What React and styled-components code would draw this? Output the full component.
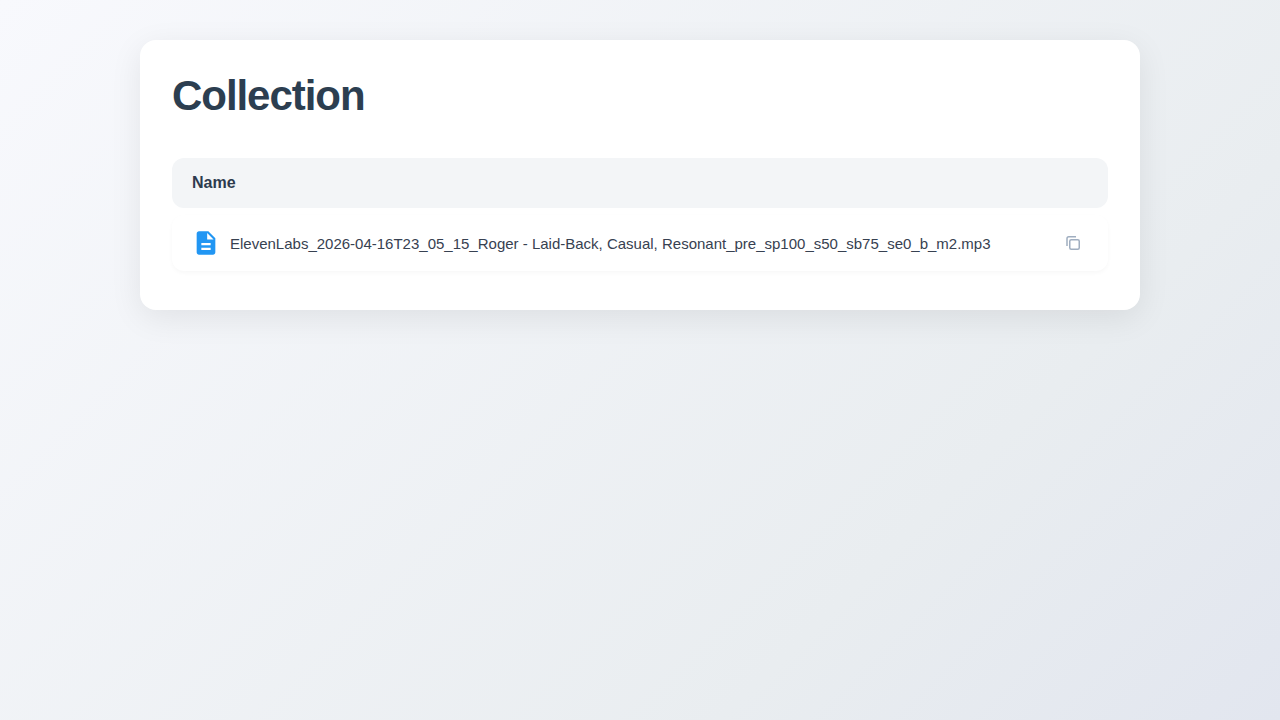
import React from 'react';
import styled, { createGlobalStyle } from 'styled-components';

const Global = createGlobalStyle`
  * { box-sizing: border-box; }
  html, body { margin: 0; height: 100%; }
  body {
    min-height: 720px;
    font-family: "Liberation Sans", Arial, sans-serif;
    background: linear-gradient(135deg, #f8f9fd 0%, #e9edf0 72%, #e2e6ef 100%);
    background-attachment: fixed;
  }
`;

const Page = styled.div`
  padding: 40px 0;
  display: flex;
  justify-content: center;
`;

const Card = styled.main`
  width: 1000px;
  padding: 32px;
  background: #fff;
  border-radius: 16px;
  box-shadow: 0 8px 32px rgba(0, 0, 0, 0.08);
`;

const Title = styled.h1`
  margin: 0 0 38px;
  font-size: 42px;
  line-height: 48px;
  font-weight: 700;
  letter-spacing: -1.05px;
  color: #2c3e50;
`;

const HeaderRow = styled.div`
  height: 50px;
  padding: 0 20px;
  display: flex;
  align-items: center;
  background: #f3f5f7;
  border-radius: 12px;
  font-size: 16px;
  font-weight: 700;
  color: #2d3b4e;
`;

const FileRow = styled.div`
  height: 56px;
  margin: 7px 0;
  padding: 0 20px;
  display: flex;
  align-items: center;
  background: #fff;
  border-radius: 12px;
  box-shadow: 0 2px 4px rgba(0, 0, 0, 0.03);
`;

const FileName = styled.span`
  flex: 1;
  margin-left: 10px;
  font-size: 15px;
  color: #374151;
`;

const CopyButton = styled.button`
  width: 30px;
  height: 30px;
  padding: 0;
  display: flex;
  align-items: center;
  justify-content: center;
  border: none;
  background: transparent;
  color: #a0aec0;
`;

const FileIcon = () => (
  <svg width="28" height="28" viewBox="0 0 24 24" fill="#2196f3">
    <path d="M14 2H6c-1.1 0-2 .9-2 2v16c0 1.1.9 2 2 2h12c1.1 0 2-.9 2-2V8l-6-6zm2 16H8v-2h8v2zm0-4H8v-2h8v2zm-3-5V3.5L18.5 9H13z" />
  </svg>
);

const CopyIcon = () => (
  <svg width="16" height="16" viewBox="0 0 16 16" fill="none" stroke="currentColor" strokeWidth="1.5">
    <rect x="4.75" y="4.75" width="9.5" height="9.5" rx="1.5" />
    <path d="M2 11V3.5A1.75 1.75 0 0 1 3.75 1.75H11" />
  </svg>
);

export default function App() {
  return (
    <Page>
      <Global />
      <Card>
        <Title>Collection</Title>
        <HeaderRow>Name</HeaderRow>
        <FileRow>
          <FileIcon />
          <FileName>ElevenLabs_2026-04-16T23_05_15_Roger - Laid-Back, Casual, Resonant_pre_sp100_s50_sb75_se0_b_m2.mp3</FileName>
          <CopyButton aria-label="Copy"><CopyIcon /></CopyButton>
        </FileRow>
      </Card>
    </Page>
  );
}
